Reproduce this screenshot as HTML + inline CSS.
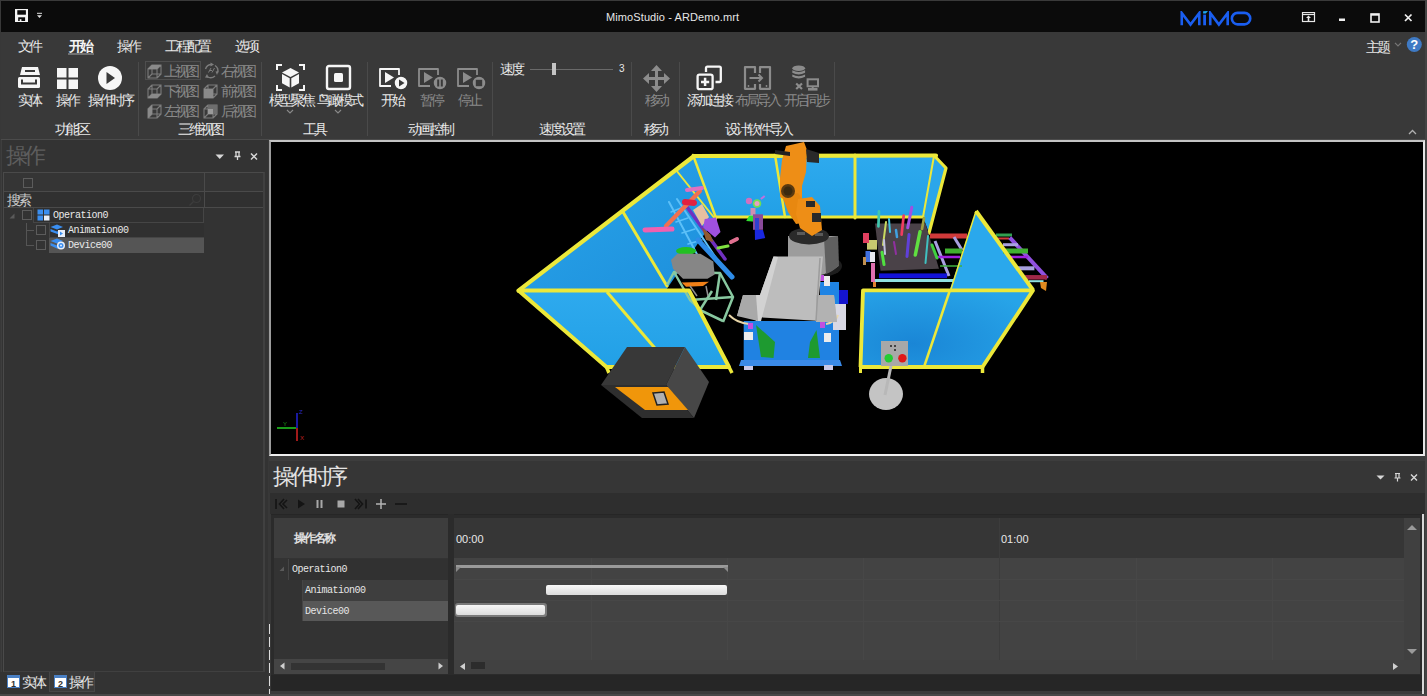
<!DOCTYPE html>
<html><head><meta charset="utf-8">
<style>
*{margin:0;padding:0;box-sizing:border-box}
html,body{width:1427px;height:696px;overflow:hidden;background:#353535;font-family:"Liberation Sans",sans-serif;color:#e8e8e8}
.a{position:absolute}
.t12{font-size:14px;line-height:14px;white-space:nowrap}
.t12 i{display:inline-block;width:var(--p,11px);font-style:normal;overflow:visible}
.lt{font-size:12px;line-height:12px;white-space:nowrap}
.dim{color:#8a8a8a}
.sep{position:absolute;width:1px;background:#4a4a4a}
.mono{font-family:"Liberation Mono",monospace;font-size:10px;letter-spacing:-0.5px;white-space:nowrap;line-height:10px}
</style></head><body>
<!-- window frame -->
<div class="a" style="left:0;top:0;width:1427px;height:696px;background:#383838"></div>
<!-- title bar -->
<div class="a" style="left:1px;top:1px;width:1424px;height:31px;background:#0b0b0b"></div>
<div class="a" style="left:0;top:0;width:1427px;height:1px;background:#3a3a3a"></div>

<!-- menu + ribbon bg -->
<div class="a" style="left:1px;top:32px;width:1424px;height:107px;background:#393939"></div>
<div class="a" style="left:1px;top:139px;width:1424px;height:1px;background:#4b4b4b"></div>


<!-- ===== title bar content ===== -->
<svg class="a" style="left:14px;top:8px" width="36" height="18" viewBox="0 0 36 18">
<rect x="1" y="1" width="13" height="13" fill="#f4f4f4"/>
<rect x="3.3" y="2.2" width="8.6" height="4.5" fill="#0b0b0b"/>
<rect x="4.2" y="9.3" width="6.9" height="3.7" fill="#0b0b0b"/>
<rect x="5.7" y="11.2" width="1.7" height="1.8" fill="#f4f4f4"/>
<rect x="23" y="4.8" width="5" height="1" fill="#e0e0e0"/>
<path d="M23 7.2 H28 L25.5 10.1 Z" fill="#e0e0e0"/>
</svg>
<div class="a lt" style="left:606px;top:11px;font-size:11px;letter-spacing:0.1px;color:#e6e6e6">MimoStudio - ARDemo.mrt</div>
<svg class="a" style="left:1180px;top:11px" width="72" height="16" viewBox="0 0 72 16">
<g fill="none" stroke="#1a5ef0" stroke-width="2.6" stroke-linejoin="miter" stroke-miterlimit="10">
<path d="M1.75 14.3 V2 L10.5 13.6 L19.3 2 V14.3"/>
<path d="M30.25 14.3 V2 L38.9 13.6 L47.7 2 V14.3"/>
<rect x="51.85" y="1.85" width="18.4" height="11.5" rx="5.75"/>
</g>
<rect x="23.2" y="3.6" width="2.8" height="10.7" fill="#1a5ef0"/>
<polygon points="23.1,0.3 28,0 25.8,2.6 23.1,2.6" fill="#1ea8f0"/>
</svg>
<svg class="a" style="left:1300px;top:12px" width="120" height="12" viewBox="0 0 120 12">
<rect x="2.5" y="0.5" width="12" height="9" fill="none" stroke="#e8e8e8" stroke-width="1.2"/>
<line x1="2.5" y1="2.5" x2="14.5" y2="2.5" stroke="#e8e8e8" stroke-width="1.2"/>
<path d="M8.5 3.5 L11 6 H9.3 V9 H7.7 V6 H6 Z" fill="#e8e8e8"/>
<rect x="39" y="6.5" width="6" height="2.5" fill="#f0f0f0"/>
<rect x="71" y="2" width="8" height="8" fill="none" stroke="#f0f0f0" stroke-width="1.6"/>
<line x1="71" y1="2.8" x2="79" y2="2.8" stroke="#f0f0f0" stroke-width="1.8"/>
<path d="M105 2.5 L111.5 9 M111.5 2.5 L105 9" stroke="#f0f0f0" stroke-width="1.7"/>
</svg>

<!-- ===== menu tabs ===== -->
<div class="a t12" style="left:18px;top:39px"><i>文</i><i>件</i></div>
<div class="a t12" style="left:69px;top:39px;font-weight:bold;color:#f4f4f4"><i>开</i><i>始</i></div>
<div class="a" style="left:68px;top:53px;width:26px;height:2px;background:#707070"></div>
<div class="a t12" style="left:117px;top:39px"><i>操</i><i>作</i></div>
<div class="a t12" style="left:165px;top:39px"><i>工</i><i>程</i><i>配</i><i>置</i></div>
<div class="a t12" style="left:235px;top:39px"><i>选</i><i>项</i></div>
<div class="a t12" style="left:1366px;top:40px"><i>主</i><i>题</i></div>
<svg class="a" style="left:1394px;top:37px" width="30" height="17" viewBox="0 0 30 17">
<path d="M1 5.8 L4 8.8 L7 5.8" fill="none" stroke="#777" stroke-width="1.2"/>
<circle cx="20.3" cy="7.5" r="7.5" fill="#3f7ac4"/>
<text x="20.3" y="12.2" text-anchor="middle" font-family="Liberation Sans" font-weight="bold" font-size="13" fill="#fff">?</text>
</svg>

<!-- ===== ribbon ===== -->
<div class="sep" style="left:138px;top:62px;height:74px"></div>
<div class="sep" style="left:261px;top:62px;height:74px"></div>
<div class="sep" style="left:367px;top:62px;height:74px"></div>
<div class="sep" style="left:492px;top:62px;height:74px"></div>
<div class="sep" style="left:631px;top:62px;height:74px"></div>
<div class="sep" style="left:679px;top:62px;height:74px"></div>
<div class="sep" style="left:834px;top:62px;height:74px"></div>

<!-- 功能区 icons -->
<svg class="a" style="left:16px;top:64px" width="110" height="28" viewBox="0 0 110 28">
<g fill="#f6f6f6">
<path d="M6 3 H22 L24 11 H4 Z"/>
<rect x="2" y="13" width="22" height="11" rx="1.5"/>
</g>
<rect x="9" y="6" width="10" height="2" fill="#393939"/>
<path d="M6 15.5 V19.5 H20 V15.5" fill="none" stroke="#393939" stroke-width="2"/>
<g fill="#f6f6f6">
<rect x="41" y="4" width="9.5" height="9.5"/><rect x="52.5" y="4" width="9.5" height="9.5"/>
<rect x="41" y="15.5" width="9.5" height="9.5"/><rect x="52.5" y="15.5" width="9.5" height="9.5"/>
</g>
<circle cx="94" cy="14" r="12" fill="#f6f6f6"/>
<path d="M90.5 8 L99 14 L90.5 20 Z" fill="#393939"/>
</svg>
<div class="a t12" style="left:18px;top:93px"><i>实</i><i>体</i></div>
<div class="a t12" style="left:56px;top:93px"><i>操</i><i>作</i></div>
<div class="a t12" style="left:88px;top:93px"><i>操</i><i>作</i><i>时</i><i>序</i></div>
<div class="a t12" style="left:55px;top:122px"><i>功</i><i>能</i><i>区</i></div>

<!-- 三维视图 -->
<div class="a" style="left:145px;top:61px;width:56px;height:19px;border:1px solid #4e4e4e"></div>
<svg class="a" style="left:146px;top:62px" width="116" height="58" viewBox="0 0 116 58"><path d="M2 7h9v9h-9z M6 3h9v9h-9z M2 7l4 -4 M11 7l4 -4 M11 16l4 -4 M2 16l4 -4" fill="none" stroke="#7c7c7c" stroke-width="1.1"/><path d="M2 7l4 -4h9l-4 4z" fill="#8a8a8a"/><path d="M2 27h9v9h-9z M6 23h9v9h-9z M2 27l4 -4 M11 27l4 -4 M11 36l4 -4 M2 36l4 -4" fill="none" stroke="#7c7c7c" stroke-width="1.1"/><path d="M2 36l4 -4h9l-4 4z" fill="#8a8a8a"/><path d="M2 47h9v9h-9z M6 43h9v9h-9z M2 47l4 -4 M11 47l4 -4 M11 56l4 -4 M2 56l4 -4" fill="none" stroke="#7c7c7c" stroke-width="1.1"/><path d="M2 47l4 -4v9l-4 4z" fill="#8a8a8a"/><path d="M58 27h9v9h-9z M62 23h9v9h-9z M58 27l4 -4 M67 27l4 -4 M67 36l4 -4 M58 36l4 -4" fill="none" stroke="#7c7c7c" stroke-width="1.1"/><path d="M58 27h9v9h-9z" fill="#8a8a8a"/><path d="M58 47h9v9h-9z M62 43h9v9h-9z M58 47l4 -4 M67 47l4 -4 M67 56l4 -4 M58 56l4 -4" fill="none" stroke="#7c7c7c" stroke-width="1.1"/><path d="M62 43h9v9h-9z" fill="#6e6e6e"/><path d="M62 47h5v5h-5z" fill="#9a9a9a"/><g fill="none" stroke="#7c7c7c" stroke-width="1.4">
<path d="M59.5 7 A6.5 6.5 0 0 1 66 2.5"/><path d="M69 3.5 A6.5 6.5 0 0 1 71.5 11"/><path d="M69 14 A6.5 6.5 0 0 1 61 14.5"/>
</g>
<path d="M64.5 0.5 L68 2.5 L64.5 4.5Z M72.5 9 L71 13 L69.5 9.5Z M61 12 L59 15.5 L63 16Z" fill="#7c7c7c"/>
<path d="M62.5 10.5 L65 6 M66 10.5 L68.5 6 M64 8.5h2" stroke="#7c7c7c" stroke-width="1"/>
</svg>
<div class="a t12 dim" style="left:164px;top:64px"><i>上</i><i>视</i><i>图</i></div>
<div class="a t12 dim" style="left:164px;top:84px"><i>下</i><i>视</i><i>图</i></div>
<div class="a t12 dim" style="left:164px;top:104px"><i>左</i><i>视</i><i>图</i></div>
<div class="a t12 dim" style="left:221px;top:64px"><i>右</i><i>视</i><i>图</i></div>
<div class="a t12 dim" style="left:221px;top:84px"><i>前</i><i>视</i><i>图</i></div>
<div class="a t12 dim" style="left:221px;top:104px"><i>后</i><i>视</i><i>图</i></div>
<div class="a t12" style="left:178px;top:122px"><i>三</i><i>维</i><i>视</i><i>图</i></div>

<!-- 工具 -->
<svg class="a" style="left:276px;top:64px" width="80" height="50" viewBox="0 0 80 50">
<g fill="none" stroke="#f6f6f6" stroke-width="2">
<path d="M1 6 V1 H6 M23 1 H28 V6 M28 21 V26 H23 M6 26 H1 V21"/>
<rect x="51" y="2" width="23" height="23" rx="2" stroke-width="2.4"/>
</g>
<path d="M14.5 4 L23 8.5 L14.5 13 L6 8.5 Z" fill="#f6f6f6"/>
<path d="M6 10 L13.7 14.2 V23.5 L6 19.3 Z" fill="#f6f6f6"/>
<path d="M23 10 L15.3 14.2 V23.5 L23 19.3 Z" fill="#f6f6f6"/>
<rect x="58" y="9" width="9" height="9" rx="1.5" fill="#f6f6f6"/>
<path d="M11 46 L14 49 L17 46" fill="none" stroke="#8a8a8a" stroke-width="1.1"/>
<path d="M59 46 L62 49 L65 46" fill="none" stroke="#8a8a8a" stroke-width="1.1"/>
</svg>
<div class="a t12" style="left:269px;top:93px"><i>模</i><i>型</i><i>聚</i><i>焦</i></div>
<div class="a t12" style="left:317px;top:93px"><i>鸟</i><i>瞰</i><i>模</i><i>式</i></div>
<div class="a t12" style="left:303px;top:122px"><i>工</i><i>具</i></div>

<!-- 动画控制 -->
<svg class="a" style="left:378px;top:67px" width="110" height="24" viewBox="0 0 110 24">
<g fill="none" stroke-width="1.8" stroke-linejoin="round">
<path d="M21 8 V2 H2 V19 H13" stroke="#f6f6f6"/>
<path d="M60 8 V2 H41 V19 H52" stroke="#8c8c8c"/>
<path d="M99 8 V2 H80 V19 H91" stroke="#8c8c8c"/>
</g>
<path d="M7 5 L16 10.5 L7 16 Z" fill="#f6f6f6"/>
<path d="M46 5 L55 10.5 L46 16 Z" fill="#8c8c8c"/>
<path d="M85 5 L94 10.5 L85 16 Z" fill="#8c8c8c"/>
<circle cx="23" cy="16" r="7" fill="#f6f6f6" stroke="#393939" stroke-width="1.5"/>
<path d="M21 12.5 L26.5 16 L21 19.5Z" fill="#393939"/>
<circle cx="62" cy="16" r="7" fill="#8c8c8c" stroke="#393939" stroke-width="1.5"/>
<rect x="59.2" y="12.5" width="2" height="7" fill="#393939"/><rect x="62.8" y="12.5" width="2" height="7" fill="#393939"/>
<circle cx="101" cy="16" r="7" fill="#8c8c8c" stroke="#393939" stroke-width="1.5"/>
<rect x="97.8" y="12.8" width="6.4" height="6.4" fill="#393939"/>
</svg>
<div class="a t12" style="left:381px;top:93px"><i>开</i><i>始</i></div>
<div class="a t12 dim" style="left:420px;top:93px"><i>暂</i><i>停</i></div>
<div class="a t12 dim" style="left:458px;top:93px"><i>停</i><i>止</i></div>
<div class="a t12" style="left:408px;top:122px"><i>动</i><i>画</i><i>控</i><i>制</i></div>

<!-- 速度设置 -->
<div class="a t12" style="left:500px;top:62px"><i>速</i><i>度</i></div>
<div class="a" style="left:530px;top:69px;width:83px;height:1px;background:#6a6a6a"></div>
<div class="a" style="left:552px;top:63px;width:4px;height:12px;background:#c4c4c4"></div>
<div class="a lt" style="left:619px;top:63px;font-size:10px">3</div>
<div class="a t12" style="left:539px;top:122px"><i>速</i><i>度</i><i>设</i><i>置</i></div>

<!-- 移动 -->
<svg class="a" style="left:643px;top:65px" width="27" height="27" viewBox="0 0 27 27">
<g fill="#8c8c8c">
<path d="M13.5 0 L19 6 H15 V12 H21 V8 L27 13.5 L21 19 V15 H15 V21 H19 L13.5 27 L8 21 H12 V15 H6 V19 L0 13.5 L6 8 V12 H12 V6 H8 Z"/>
</g>
</svg>
<div class="a t12 dim" style="left:645px;top:93px"><i>移</i><i>动</i></div>
<div class="a t12" style="left:644px;top:122px"><i>移</i><i>动</i></div>

<!-- 设计软件导入 -->
<svg class="a" style="left:695px;top:64px" width="130" height="28" viewBox="0 0 130 28">
<g fill="none" stroke="#f6f6f6" stroke-width="2.3" stroke-linejoin="round">
<path d="M11 8 V4 Q11 2.6 12.4 2.6 H24.4 Q25.8 2.6 25.8 4 V16.6 Q25.8 18 24.4 18 H20.5"/>
<rect x="2.6" y="10.6" width="15" height="14.6" rx="2"/>
</g>
<path d="M10.1 13.8 V22 M6 17.9 H14.2" stroke="#f6f6f6" stroke-width="2.5"/>
<g fill="none" stroke="#8c8c8c" stroke-width="2.2" stroke-linejoin="round">
<path d="M60 9 V3.2 H50 V24.8 H60 V20"/>
<path d="M65 9 V3.2 H75 V24.8 H65 V20"/>
</g>
<path d="M54.5 14 H67 M63.5 10.5 L67 14 L63.5 17.5" fill="none" stroke="#8c8c8c" stroke-width="2"/>
<circle cx="53.5" cy="22" r="0.9" fill="#8c8c8c"/><circle cx="71.5" cy="22" r="0.9" fill="#8c8c8c"/>
<g fill="#8c8c8c">
<ellipse cx="103.7" cy="4.2" rx="6.4" ry="2.8"/>
<path d="M97.3 6.2 Q103.7 9.8 110.1 6.2 V8.8 Q103.7 12.4 97.3 8.8Z"/>
<path d="M97.3 10.4 Q103.7 14 110.1 10.4 V12.8 Q103.7 16.4 97.3 12.8Z"/>
<rect x="113" y="24" width="9.5" height="2.6"/><rect x="116.7" y="22" width="2" height="3"/>
</g>
<rect x="112.6" y="15.3" width="10.4" height="7" fill="none" stroke="#8c8c8c" stroke-width="2"/>
<path d="M101.2 19.5 L107 25 M107 19.5 L101.2 25" stroke="#8c8c8c" stroke-width="2.2"/>
</svg>
<div class="a t12" style="left:687px;top:93px"><i>添</i><i>加</i><i>连</i><i>接</i></div>
<div class="a t12 dim" style="left:735px;top:93px"><i>布</i><i>局</i><i>导</i><i>入</i></div>
<div class="a t12 dim" style="left:784px;top:93px"><i>开</i><i>启</i><i>同</i><i>步</i></div>
<div class="a t12" style="left:725px;top:122px"><i>设</i><i>计</i><i>软</i><i>件</i><i>导</i><i>入</i></div>
<svg class="a" style="left:1408px;top:129px" width="9" height="6" viewBox="0 0 9 6"><path d="M1 5 L4.5 1.5 L8 5" fill="none" stroke="#b0b0b0" stroke-width="1.3"/></svg>

<!-- left panel -->
<div class="a" style="left:1px;top:140px;width:267px;height:556px;background:#333333"></div>


<!-- ===== left panel content ===== -->
<div class="a" style="left:1px;top:140px;width:1px;height:532px;background:#3e3e3e"></div>
<div class="a t12" style="left:6px;top:145px;font-size:22px;line-height:22px;--p:17.5px;color:#5e5e5e"><i>操</i><i>作</i></div>
<svg class="a" style="left:214px;top:151px" width="46" height="10" viewBox="0 0 46 10">
<path d="M1.5 3.5 H10 L5.75 8 Z" fill="#d8d8d8"/>
<path d="M21 1 H26 M22 1 V5.5 H25 V1 M20.5 5.5 H26.5 M23.5 5.5 V9" fill="none" stroke="#d8d8d8" stroke-width="1.3"/>
<path d="M37 2.5 L43 8.5 M43 2.5 L37 8.5" stroke="#d8d8d8" stroke-width="1.5"/>
</svg>
<!-- grid -->
<div class="a" style="left:3px;top:172px;width:262px;height:501px;border:1px solid #4a4a4a;border-right:2px solid #404040;border-bottom:2px solid #404040;background:#333"></div>
<div class="a" style="left:4px;top:173px;width:259px;height:18px;background:#353535"></div>
<div class="a" style="left:4px;top:191px;width:259px;height:1px;background:#4a4a4a"></div>
<div class="a" style="left:4px;top:192px;width:259px;height:15px;background:#303030"></div>
<div class="a" style="left:4px;top:207px;width:259px;height:1px;background:#4a4a4a"></div>
<div class="a" style="left:204px;top:173px;width:1px;height:34px;background:#4a4a4a"></div>
<div class="a" style="left:23px;top:178px;width:10px;height:10px;border:1px solid #5c5c5c"></div>
<div class="a t12" style="left:7px;top:193px;color:#c8c8c8"><i>搜</i><i>索</i></div>
<svg class="a" style="left:188px;top:193px" width="14" height="14" viewBox="0 0 14 14"><circle cx="8.5" cy="5.5" r="4" fill="none" stroke="#3c3c3c" stroke-width="1.2"/><line x1="5.5" y1="8.5" x2="1.5" y2="12.5" stroke="#3c3c3c" stroke-width="1.2"/></svg>
<!-- tree rows -->
<div class="a" style="left:33px;top:208px;width:171px;height:15px;border-left:1px solid #454545;border-bottom:1px solid #454545;border-right:1px solid #454545;background:#303030"></div>
<svg class="a" style="left:9px;top:213px" width="6" height="6" viewBox="0 0 6 6"><path d="M5.5 0.5 V5.5 H0.5Z" fill="#5a5a5a"/></svg>
<div class="a" style="left:22px;top:210px;width:10px;height:10px;border:1px solid #5c5c5c"></div>
<svg class="a" style="left:37px;top:209px" width="13" height="12" viewBox="0 0 13 12">
<rect x="0.5" y="0.5" width="5.5" height="5" fill="#3a8ef0"/><rect x="7" y="0.5" width="5.5" height="5" fill="#3a8ef0"/>
<rect x="0.5" y="6.5" width="5.5" height="5" fill="#3a8ef0"/><rect x="7" y="6.5" width="5.5" height="5" fill="#e8eef8"/>
</svg>
<div class="a mono" style="left:53px;top:211px;color:#eaeaea">Operation0</div>
<div class="a" style="left:49px;top:223px;width:155px;height:15px;border-left:1px solid #454545;border-bottom:1px solid #454545;background:#303030"></div>
<div class="a" style="left:49px;top:238px;width:155px;height:15px;background:#555555"></div>
<div class="a" style="left:26px;top:223px;width:1px;height:23px;background:#555"></div>
<div class="a" style="left:26px;top:230px;width:8px;height:1px;background:#555"></div>
<div class="a" style="left:26px;top:245px;width:8px;height:1px;background:#555"></div>
<div class="a" style="left:36px;top:225px;width:10px;height:10px;border:1px solid #5c5c5c"></div>
<div class="a" style="left:36px;top:240px;width:10px;height:10px;border:1px solid #5c5c5c"></div>
<svg class="a" style="left:50px;top:224px" width="16" height="28" viewBox="0 0 16 28">
<path d="M0.5 3 L7 0.5 L13 3 L7 5.5Z" fill="#3a8ef0"/>
<path d="M0.5 5 L7 7.5 L10 6.3 V11 L0.5 7.5Z" fill="#3a8ef0"/>
<rect x="8" y="6" width="7" height="7" fill="#e8eef8"/><path d="M10 7.5 L13 9.5 L10 11.5Z" fill="#3a8ef0"/>
<path d="M0.5 17 L7 14.5 L13 17 L7 19.5Z" fill="#3a8ef0"/>
<path d="M0.5 19 L7 21.5 L8 21 V25 L0.5 21.5Z" fill="#3a8ef0"/>
<circle cx="11" cy="21.5" r="4" fill="#e8eef8"/><circle cx="11" cy="21.5" r="2.5" fill="#3a8ef0"/><circle cx="11" cy="21.5" r="1" fill="#e8eef8"/>
</svg>
<div class="a mono" style="left:68px;top:226px;color:#eaeaea">Animation00</div>
<div class="a mono" style="left:68px;top:241px;color:#eaeaea">Device00</div>
<!-- bottom tabs -->

<div class="a" style="left:0px;top:672px;width:268px;height:24px;background:#333"></div>
<div class="a" style="left:49px;top:672px;width:46px;height:20px;background:#3a3a3a;border:1px solid #464646;border-top:none"></div>
<svg class="a" style="left:7px;top:675px" width="60" height="14" viewBox="0 0 60 14">
<rect x="0" y="0" width="13" height="13" fill="#4a80c4"/><rect x="1" y="3" width="11" height="9" fill="#fff"/>
<text x="6.5" y="11.5" text-anchor="middle" font-family="Liberation Sans" font-weight="bold" font-size="9" fill="#333">1</text>
<rect x="47" y="0" width="13" height="13" fill="#4a80c4"/><rect x="48" y="3" width="11" height="9" fill="#fff"/>
<text x="53.5" y="11.5" text-anchor="middle" font-family="Liberation Sans" font-weight="bold" font-size="9" fill="#333">2</text>
</svg>
<div class="a t12" style="left:22px;top:675px"><i>实</i><i>体</i></div>
<div class="a t12" style="left:69px;top:675px"><i>操</i><i>作</i></div>

<!-- viewport -->
<div class="a" style="left:269px;top:140px;width:1156px;height:316px;background:#000;border:2px solid #c9c9c9;border-left-color:#9c9c9c;border-right-color:#e4e4e4;border-bottom-color:#eeeeee;border-top-color:#c4c4c4"></div>

<svg class="a" style="left:271px;top:142px" width="1152" height="312" viewBox="271 142 1152 312">
<defs>
<linearGradient id="bg1" x1="0" y1="0" x2="1" y2="1"><stop offset="0" stop-color="#2aa6ea"/><stop offset="1" stop-color="#1d8fdc"/></linearGradient>
<linearGradient id="bg2" x1="0" y1="0" x2="0" y2="1"><stop offset="0" stop-color="#2eaaee"/><stop offset="1" stop-color="#22a0e6"/></linearGradient>
<radialGradient id="bg3" cx="0.3" cy="0.7" r="0.8"><stop offset="0" stop-color="#1a86d6"/><stop offset="1" stop-color="#27a4e8"/></radialGradient>
</defs>
<!-- back wall -->
<polygon points="693,155 936,155 923,217 716,217" fill="url(#bg2)"/>
<!-- short right wall -->
<polygon points="934,155 946,168 929,233 923,217" fill="#2ba6ea"/>
<!-- upper-left wall -->
<polygon points="517,290 693,155 716,217 666,290" fill="url(#bg1)"/>
<!-- lower-left wall -->
<polygon points="517,290 689,291 729,367 606,367" fill="url(#bg2)"/>
<!-- lower-right wall -->
<polygon points="863,290 1034,290 982,367 861,367" fill="url(#bg3)"/>
<!-- triangle wall -->
<polygon points="976,211 1034,290 950,289" fill="#2aa8ec"/>

<!-- yellow lines back -->
<g stroke="#ece83a" stroke-linecap="round" stroke-linejoin="round" fill="none">
<polyline points="518.5,290.6 694,156 936,155.5" stroke-width="4.2"/>
<polyline points="934,155.5 946,168 929,233" stroke-width="3.2"/>
<line x1="716" y1="217" x2="923" y2="217" stroke-width="3"/>
<line x1="693" y1="155" x2="716" y2="218" stroke-width="2.5"/>
<line x1="775" y1="155" x2="785" y2="217" stroke-width="2.5"/>
<line x1="855" y1="155" x2="855" y2="218" stroke-width="3"/>
<line x1="934" y1="156" x2="923" y2="217" stroke-width="2"/>
<line x1="623" y1="212" x2="667" y2="286" stroke-width="3"/>
<line x1="676" y1="170" x2="716" y2="220" stroke-width="2"/>
</g>

<!-- fixture table right -->
<g stroke-linecap="butt" fill="none">
<line x1="930" y1="236" x2="967" y2="236" stroke="#d03a3a" stroke-width="5"/>
<line x1="996" y1="235" x2="1012" y2="235" stroke="#30a050" stroke-width="3"/>
<line x1="997" y1="238.5" x2="1009" y2="238.5" stroke="#d03a3a" stroke-width="2"/>
<line x1="954" y1="237" x2="962" y2="250" stroke="#a8a0e0" stroke-width="3"/>
<line x1="935" y1="241" x2="949" y2="276" stroke="#a8a0e0" stroke-width="3"/>
<line x1="1009.8" y1="237.6" x2="1047.3" y2="278.4" stroke="#9050e0" stroke-width="4"/>
<line x1="1003" y1="244.7" x2="1018" y2="244.7" stroke="#a8a0e0" stroke-width="3"/>
<line x1="945" y1="251" x2="962" y2="251" stroke="#40b030" stroke-width="5"/>
<line x1="1003" y1="251" x2="1028" y2="251" stroke="#40b030" stroke-width="5"/>
<line x1="934" y1="257" x2="960" y2="257" stroke="#a020e0" stroke-width="2.5"/>
<line x1="1010" y1="257" x2="1028" y2="257" stroke="#a020e0" stroke-width="2.5"/>
<line x1="940" y1="266" x2="962" y2="266" stroke="#40b040" stroke-width="1.5"/>
<line x1="1017.6" y1="268.3" x2="1034.4" y2="268.3" stroke="#a8a0e0" stroke-width="4"/>
<line x1="1025" y1="277.3" x2="1047" y2="277.3" stroke="#a02848" stroke-width="4.5"/>
<line x1="871" y1="280.5" x2="954" y2="280.5" stroke="#90e0e0" stroke-width="3"/>
<line x1="1029" y1="281.2" x2="1043.5" y2="281.2" stroke="#90e0e0" stroke-width="2"/>
</g>
<polygon points="1040,282 1047,282 1046,291 1041,288" fill="#e08a20"/>
<rect x="879" y="273.4" width="68" height="4.8" fill="#1212d8"/>
<polygon points="875,223.6 925.5,223.6 939,268.7 880.5,270.7" fill="#4a4248"/>
<rect x="871" y="263" width="4" height="19" fill="#e070b0"/>
<rect x="873" y="282" width="3" height="5" fill="#e08030"/>
<g stroke-width="2.7" fill="none" stroke-linecap="round">
<line x1="879" y1="211.4" x2="878.4" y2="226.4" stroke="#40c8b0"/>
<line x1="903.7" y1="215.5" x2="901.6" y2="234.6" stroke="#f03c60"/>
<line x1="911.8" y1="207.3" x2="907.7" y2="227.7" stroke="#a050e0" stroke-width="3"/>
<line x1="920" y1="231.8" x2="915.3" y2="255" stroke="#60e040" stroke-width="3.5"/>
<line x1="909" y1="234.6" x2="907" y2="256.4" stroke="#6040d8" stroke-width="3"/>
<line x1="924" y1="218" x2="922" y2="229" stroke="#a0a040"/>
<line x1="928" y1="236" x2="925.5" y2="263" stroke="#40c0c0" stroke-width="2"/>
<line x1="882" y1="252.3" x2="884" y2="264.6" stroke="#50e040" stroke-width="3"/>
<line x1="886" y1="222" x2="883" y2="245" stroke="#c8d860" stroke-width="2"/>
<line x1="889" y1="219" x2="890" y2="232" stroke="#40c0e0" stroke-width="2"/>
<line x1="894" y1="242" x2="896" y2="254" stroke="#9030a0" stroke-width="2"/>
<line x1="884" y1="240" x2="885" y2="254" stroke="#c0c0e0" stroke-width="2"/>
<line x1="896" y1="230" x2="897" y2="237" stroke="#40a0e0" stroke-width="2.5"/>
<line x1="932" y1="245" x2="937" y2="258" stroke="#40d040" stroke-width="3"/>
</g>
<rect x="867" y="240" width="10" height="9.6" fill="#c8c870"/>
<rect x="865.5" y="251" width="5" height="11" fill="#4070e0"/>
<rect x="870" y="252" width="5" height="10" fill="#e8e8f0"/>
<rect x="863" y="257" width="3" height="8" fill="#c09050"/>
<rect x="863" y="233" width="6" height="10" fill="#e04060"/>
<!-- left fixture -->
<g fill="none" stroke-linecap="round" stroke-linejoin="round">
<line x1="669" y1="202" x2="699" y2="258" stroke="#5cc0f8" stroke-width="2"/>
<line x1="677" y1="199" x2="716" y2="258" stroke="#5cc0f8" stroke-width="2"/>
<line x1="671" y1="212" x2="681" y2="208" stroke="#5cc0f8" stroke-width="1.5"/>
<line x1="676" y1="222" x2="688" y2="218" stroke="#5cc0f8" stroke-width="1.5"/>
<line x1="682" y1="233" x2="695" y2="229" stroke="#5cc0f8" stroke-width="1.5"/>
<line x1="688" y1="244" x2="702" y2="240" stroke="#5cc0f8" stroke-width="1.5"/>
<line x1="698" y1="240" x2="732" y2="277" stroke="#2e8ce8" stroke-width="5"/>
<line x1="687" y1="207" x2="725" y2="259" stroke="#7030c0" stroke-width="3.5"/>
<line x1="666" y1="226" x2="700" y2="191" stroke="#f07050" stroke-width="4.3"/>
<line x1="645" y1="230" x2="672" y2="229" stroke="#f060b0" stroke-width="5"/>
<line x1="687" y1="190" x2="702" y2="188" stroke="#e070c0" stroke-width="4"/>
<line x1="685" y1="202" x2="694" y2="203" stroke="#e02040" stroke-width="6"/>
<line x1="731" y1="242" x2="737" y2="239" stroke="#e07090" stroke-width="4"/>
<line x1="718" y1="248" x2="728" y2="246" stroke="#80e040" stroke-width="3"/>
</g>
<polygon points="693,210 702,204 709,217 702,226" fill="#e8c0a0"/>
<polygon points="704.7,219 716,217.5 720.5,232 715,237.6 703.3,227.5" fill="#a050e0"/>
<polygon points="702,227.5 710.5,234.7 713.4,242 706,240" fill="#905a30"/>
<ellipse cx="686" cy="251" rx="10" ry="4" fill="#22c022"/>
<g fill="none" stroke="#88c8a0" stroke-width="2.5" stroke-linejoin="round">
<polyline points="667,285 674,272 720,273 733,297 723,322"/>
<polyline points="690,300 733,297"/>
<polyline points="674,272 690,300 702,311 723,321"/>
<line x1="700" y1="310" x2="712" y2="291"/>
<line x1="720" y1="273" x2="716" y2="300"/>
</g>
<polygon points="671,260 677.4,253.7 700.4,253.7 713.3,261.6 714.7,274.5 707.5,278.8 683,278.8 673,268.7" fill="#868686"/>
<polygon points="681.7,282.4 709,281.7 703,286 686,286.7" fill="#f08018"/>
<line x1="690" y1="286" x2="697" y2="296" stroke="#909090" stroke-width="1.5"/>
<line x1="706" y1="286" x2="708" y2="296" stroke="#909090" stroke-width="1.5"/>
<!-- small figure -->
<g>
<rect x="750.5" y="208" width="5" height="7" fill="#d090b0"/>
<circle cx="757" cy="203.5" r="4.3" fill="#70e050"/>
<circle cx="757" cy="203.5" r="2.5" fill="#e8a0c0"/>
<circle cx="749" cy="201" r="3.2" fill="#d070c0"/>
<line x1="760.9" y1="199" x2="764.7" y2="196" stroke="#c070e0" stroke-width="2"/>
<polygon points="746.2,221 749,216 760,216 758,222" fill="#30e030"/>
<rect x="753" y="214.3" width="10" height="15.5" fill="#8a4a9a"/>
<rect x="755" y="218" width="4" height="12" fill="#3040d0"/>
<polygon points="754.8,230 763,230 765.2,238 755,240" fill="#1a28e0"/>
</g>

<!-- robot -->
<ellipse cx="820" cy="266" rx="22" ry="11" fill="#1e1e1e"/>
<path d="M788,236 L838,236 L838.5,266 Q826,276 812,276 Q796,275 788,267 Z" fill="#9c9c9c"/>
<path d="M824,238 L838,236 L838.5,266 Q832,272 826,274 Z" fill="#606060"/>
<ellipse cx="809" cy="236" rx="20" ry="8.5" fill="#2a2a2a"/>
<rect x="797" y="232" width="8" height="3" fill="#5a5a5a"/><rect x="815" y="233" width="8" height="3" fill="#5a5a5a"/>
<path d="M786,146 L804,142 L807,150 L806,172 L802,186 L802,198 L795,206 L780,197 L780,178 L782,160 Z" fill="#ee8e16"/>
<path d="M782,196 L798,193 L806,204 L808,222 L796,224 L788,212 Z" fill="#e88810"/>
<path d="M798,199 L812,197 L820,206 L822,230 L812,236 L800,228 L796,214 Z" fill="#ee8e16"/>
<path d="M775,150 L790,152 L790,156 L775,154 Z" fill="#222"/>
<path d="M806,149 L819,153 L819,163 L807,162 Z" fill="#2a2a2a"/>
<circle cx="788" cy="191" r="7" fill="#5a3a10"/>
<circle cx="788" cy="191" r="4.5" fill="#3a2a10"/>
<rect x="806" y="201" width="9" height="6" fill="#2a2a2a"/>
<rect x="812" y="213" width="9" height="9" fill="#2a2a2a"/>

<!-- blue table -->
<polygon points="820,282 839,282 839,321 820,321" fill="#1f84e4"/>
<polygon points="743.7,321 839,321 839,362 743.7,362" fill="#2082e2"/>
<polygon points="741,360 840,360 842,366 739,366" fill="#3a8ae8"/>
<rect x="839" y="290" width="9" height="14" fill="#1414d0"/>
<rect x="833" y="304" width="13" height="26" fill="#d8d8e4"/>
<rect x="744" y="366" width="9" height="4" fill="#c8c8e8"/><rect x="824" y="365" width="9" height="5" fill="#c8c8e8"/>
<polygon points="756,325 775,342 773.5,358 761,357" fill="#1e9a30"/>
<polygon points="816.5,330 820,358 808,358 810,342" fill="#1e9a30"/>
<g fill="#ececec"><rect x="744" y="332" width="9" height="8"/><rect x="824" y="333" width="7" height="9"/><rect x="824" y="276" width="6" height="10"/></g>
<path d="M729,315 Q737,323 749,324" fill="none" stroke="#e8d6a8" stroke-width="2"/>
<path d="M838,315 Q836,322 826,324" fill="none" stroke="#e8d6a8" stroke-width="2"/>
<g fill="#c050e0"><rect x="748" y="323" width="5" height="6"/><rect x="820" y="322" width="5" height="6"/><rect x="820" y="275" width="4" height="6"/></g>

<!-- gray trough -->
<polygon points="773.5,256.5 823,256.5 819,295 834,295 837,322 737,316 743,295 760,295" fill="#bdbdbd"/>
<polygon points="773.5,256.5 778,257 761,321 756,321 743,295 760,295" fill="#d2d2d2"/>
<polygon points="743,295 756,295 758,321 737,316" fill="#a9a9a9"/>
<polygon points="816,295 834,295 837,322 816,322" fill="#b2b2b2"/>
<line x1="820" y1="258" x2="816" y2="321" stroke="#9c9c9c" stroke-width="1.5"/>
<!-- yellow lines front -->
<g stroke="#ece83a" stroke-linecap="butt" stroke-linejoin="round" fill="none">
<polyline points="518.5,290.4 689,290.4 729,367 606.5,367 518.5,290.4" stroke-width="4"/>
<line x1="606.5" y1="367" x2="609" y2="373" stroke-width="3.5"/>
<line x1="729" y1="367" x2="732" y2="373" stroke-width="3.5"/>
<line x1="607" y1="292" x2="671" y2="367" stroke-width="3"/>
<polyline points="860.5,367 863,290.4 1033,290.4 982.5,367 860.5,367" stroke-width="3.8"/>
<line x1="860.5" y1="367" x2="860.5" y2="373" stroke-width="3"/>
<line x1="982.5" y1="367" x2="982.5" y2="373" stroke-width="3.5"/>
<line x1="950" y1="290" x2="924" y2="367" stroke-width="2.5"/>
<line x1="976" y1="211" x2="1033" y2="290" stroke-width="4"/>
<line x1="976" y1="211" x2="951" y2="289" stroke-width="1.5"/>
</g>

<!-- control panel -->
<ellipse cx="886" cy="394" rx="17" ry="16" fill="#c4c4c4"/>
<line x1="891" y1="366" x2="885" y2="395" stroke="#b8b8b8" stroke-width="3"/>
<rect x="881" y="341" width="27" height="25" fill="#a8a8a8"/>
<circle cx="888.7" cy="358.3" r="4.2" fill="#22cc33"/>
<circle cx="902.4" cy="358.3" r="4.2" fill="#e01818"/>
<g fill="#222"><circle cx="891" cy="346" r="1"/><circle cx="895" cy="346" r="1"/><circle cx="895" cy="350" r="1"/></g>

<!-- dark box -->
<polygon points="627,347 685,347 666,385 601,385" fill="#383838"/>
<polygon points="685,347 709,382 694,418 666,385" fill="#474747"/>
<polygon points="601,385 666,385 694,418 642,418" fill="#2e2e2e"/>
<polygon points="615,387 668,387 688,410 645,410" fill="#f0960a"/>
<polygon points="653,393 664,392 668,404 657,405" fill="#b0b0b0" stroke="#222" stroke-width="1.5"/>

<!-- axis -->
<line x1="277" y1="428" x2="297" y2="428" stroke="#1a9a1a" stroke-width="2"/>
<line x1="297" y1="413" x2="297" y2="428" stroke="#1a1aa0" stroke-width="2"/>
<line x1="297" y1="428" x2="297" y2="441" stroke="#a01a1a" stroke-width="2"/>
<text x="283" y="426" font-family="Liberation Sans" font-size="6" fill="#1a9a1a">Y</text>
<text x="299" y="414" font-family="Liberation Sans" font-size="6" fill="#2a2ac0">Z</text>
<text x="300" y="440" font-family="Liberation Sans" font-size="6" fill="#c02020">X</text>
</svg>
<!-- timeline panel -->
<div class="a" style="left:269px;top:456px;width:1156px;height:240px;background:#383838"></div>


<!-- ===== timeline ===== -->
<div class="a" style="left:269px;top:456px;width:1156px;height:37px;background:#363636"></div>
<div class="a" style="left:269px;top:456px;width:1156px;height:5px;background:#3d3d3d"></div>
<div class="a t12" style="left:273px;top:466px;font-size:22px;line-height:22px;--p:17.5px;color:#e4e4e4"><i>操</i><i>作</i><i>时</i><i>序</i></div>
<svg class="a" style="left:1375px;top:473px" width="46" height="10" viewBox="0 0 46 10">
<path d="M1.5 2.5 H9.5 L5.5 6.5 Z" fill="#d8d8d8"/>
<path d="M20 0.5 H25 M21 0.5 V5 H24 V0.5 M19.5 5 H25.5 M22.5 5 V8.5" fill="none" stroke="#d8d8d8" stroke-width="1.2"/>
<path d="M36 1.5 L42 7.5 M42 1.5 L36 7.5" stroke="#d8d8d8" stroke-width="1.4"/>
</svg>
<div class="a" style="left:270px;top:493px;width:1155px;height:21px;background:#2e2e2e"></div>
<svg class="a" style="left:273px;top:496px" width="140" height="16" viewBox="0 0 140 16">
<g fill="none" stroke="#141414" stroke-width="1.6">
<path d="M3 3 V13"/>
<path d="M11 3 L6.5 8 L11 13 M14 4 L10 8 L14 12"/>
<path d="M82 3 L86.5 8 L82 13 M85 3 L89.5 8 L85 13"/>
<path d="M93 3.5 V12.5"/>
<path d="M122 8 H134"/>
</g>
<path d="M25 3.5 L32 8 L25 12.5Z" fill="#141414"/>
<g fill="#a8a8a8">
<rect x="43.5" y="4" width="2" height="8"/><rect x="47.5" y="4" width="2" height="8"/>
<rect x="64.5" y="4.5" width="7" height="7"/>
</g>
<path d="M103 8 H113 M108 3 V13" stroke="#b4b4b4" stroke-width="1.5" fill="none"/>
</svg>
<!-- grid -->
<div class="a" style="left:271px;top:514px;width:1152px;height:182px;background:#2b2b2b;border-top:1px solid #262626"></div>
<div class="a" style="left:274px;top:518px;width:174px;height:141px;background:#333"></div>
<div class="a" style="left:274px;top:518px;width:174px;height:40px;background:#3d3d3d"></div>
<div class="a t12" style="left:294px;top:532px;font-size:12px;line-height:12px;--p:10px;font-weight:bold;color:#e0e0e0"><i>操</i><i>作</i><i>名</i><i>称</i></div>
<div class="a" style="left:288px;top:559px;width:160px;height:21px;background:#313131;border-left:1px solid #454545"></div>
<svg class="a" style="left:279px;top:566px" width="6" height="6" viewBox="0 0 6 6"><path d="M5 0.5 V5 H0.5Z" fill="#5a5a5a"/></svg>
<div class="a" style="left:302px;top:580px;width:146px;height:21px;background:#3e3e3e;border-left:1px solid #454545"></div>
<div class="a" style="left:302px;top:601px;width:146px;height:20px;background:#585858;border-left:1px solid #454545"></div>
<div class="a mono" style="left:292px;top:565px;color:#e6e6e6">Operation0</div>
<div class="a mono" style="left:305px;top:586px;color:#e6e6e6">Animation00</div>
<div class="a mono" style="left:305px;top:607px;color:#e6e6e6">Device00</div>
<!-- left scrollbar -->
<div class="a" style="left:274px;top:659px;width:174px;height:15px;background:#454545"></div>
<svg class="a" style="left:278px;top:661px" width="170" height="10" viewBox="0 0 170 10">
<path d="M2 5 L6.5 1.5 V8.5Z" fill="#cfcfcf"/><path d="M165 5 L160.5 1.5 V8.5Z" fill="#cfcfcf"/>
</svg>
<div class="a" style="left:291px;top:663px;width:94px;height:7px;background:#333"></div>
<div class="a" style="left:448px;top:514px;width:6px;height:182px;background:#2b2b2b"></div>
<!-- right grid -->
<div class="a" style="left:454px;top:518px;width:950px;height:40px;background:#363636"></div>
<div class="a" style="left:454px;top:558px;width:950px;height:102px;background:#434343"></div>
<div class="a" style="left:1404px;top:518px;width:16px;height:142px;background:#404040"></div>
<div class="a" style="left:454px;top:660px;width:966px;height:14px;background:#414141"></div>
<div class="a lt" style="left:456px;top:533px;font-size:11px;color:#e8e8e8">00:00</div>
<div class="a lt" style="left:1001px;top:533px;font-size:11px;color:#e8e8e8">01:00</div>
<div class="a" style="left:999px;top:518px;width:1px;height:142px;background:#3c3c3c"></div>
<div class="a" style="left:591px;top:558px;width:1px;height:102px;background:#474747"></div>
<div class="a" style="left:727px;top:558px;width:1px;height:102px;background:#474747"></div>
<div class="a" style="left:863px;top:558px;width:1px;height:102px;background:#474747"></div>
<div class="a" style="left:1136px;top:558px;width:1px;height:102px;background:#474747"></div>
<div class="a" style="left:1272px;top:558px;width:1px;height:102px;background:#474747"></div>
<div class="a" style="left:454px;top:579px;width:950px;height:1px;background:#474747"></div>
<div class="a" style="left:454px;top:600px;width:950px;height:1px;background:#474747"></div>
<div class="a" style="left:454px;top:621px;width:950px;height:1px;background:#474747"></div>
<!-- bars -->
<div class="a" style="left:456px;top:565px;width:272px;height:3px;background:#9a9a9a"></div>
<svg class="a" style="left:456px;top:567px" width="272" height="5" viewBox="0 0 272 5"><path d="M0 0 H5 L0 5Z M272 0 H267 L272 5Z" fill="#8a8a8a"/></svg>
<div class="a" style="left:546px;top:585px;width:181px;height:10px;background:linear-gradient(#f8f8f8,#dcdcdc);border-radius:2px"></div>
<div class="a" style="left:455px;top:603px;width:92px;height:14px;background:#7a7a7a;border-radius:3px"></div>
<div class="a" style="left:456px;top:605px;width:89px;height:10px;background:linear-gradient(#f8f8f8,#dcdcdc);border-radius:2px"></div>
<svg class="a" style="left:458px;top:662px" width="950" height="10" viewBox="0 0 950 10">
<path d="M2 4.5 L7 1 V8Z" fill="#cfcfcf"/><path d="M940 4.5 L935 1 V8Z" fill="#cfcfcf"/>
</svg>
<div class="a" style="left:471px;top:662px;width:14px;height:7px;background:#2c2c2c"></div>
<svg class="a" style="left:1406px;top:522px" width="12" height="136" viewBox="0 0 12 136">
<path d="M1 8 L6 3 L11 8Z" fill="#9a9a9a"/><path d="M1 127 L6 132 L11 127Z" fill="#9a9a9a"/>
</svg>
<div class="a" style="left:271px;top:675px;width:1152px;height:16px;background:#262626"></div>
<div class="a" style="left:269px;top:691px;width:1156px;height:5px;background:#3a3a3a"></div>
<div class="a" style="left:1422px;top:514px;width:2px;height:182px;background:#d8d8d8"></div>
<div class="a" style="left:269px;top:624px;width:1px;height:72px;background:repeating-linear-gradient(#dcdcdc 0 10px,transparent 10px 13px)"></div>
<div class="a" style="left:0;top:694px;width:1427px;height:2px;background:#474747"></div>
<div class="a" style="left:1425px;top:0;width:2px;height:696px;background:#444"></div>

</body></html>
